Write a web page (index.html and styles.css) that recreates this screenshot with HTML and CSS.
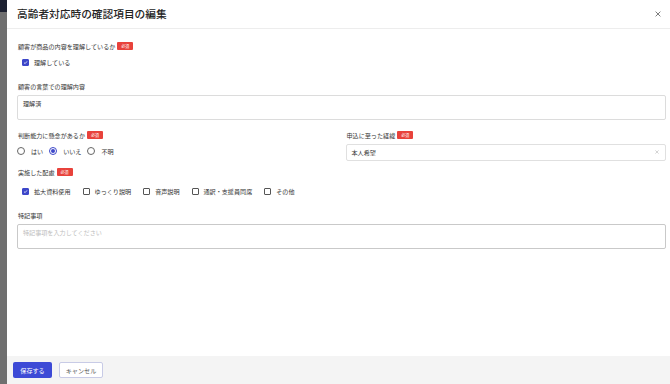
FILE: index.html
```html
<!DOCTYPE html>
<html lang="ja">
<head>
<meta charset="utf-8">
<link rel="stylesheet" href="styles.css">
</head>
<body>
<div class="page">
  <div class="strip"></div>
  <div class="modal">
    <div class="header">
      <h1 class="title">高齢者対応時の確認項目の編集</h1>
      <svg class="close" viewBox="0 0 10 10" width="6" height="6"><path d="M1 1L9 9M9 1L1 9" stroke="#777" stroke-width="1.6" fill="none"/></svg>
    </div>
    <div class="body">
      <div class="field f1">
        <div class="label">顧客が商品の内容を理解しているか<span class="badge">必須</span></div>
        <div class="options indent">
          <label class="opt"><span class="cb checked"><svg viewBox="0 0 10 10"><path d="M2 5.2L4.2 7.3L8 2.8" stroke="#fff" stroke-width="1.5" fill="none"/></svg></span>理解している</label>
        </div>
      </div>
      <div class="field f2">
        <div class="label">顧客の言葉での理解内容</div>
        <div class="textarea">理解済</div>
      </div>
      <div class="row f3">
        <div class="field">
          <div class="label">判断能力に懸念があるか<span class="badge">必須</span></div>
          <div class="options radios">
            <label class="opt"><span class="radio"></span>はい</label>
            <label class="opt"><span class="radio on"></span>いいえ</label>
            <label class="opt"><span class="radio"></span>不明</label>
          </div>
        </div>
        <div class="field">
          <div class="label">申込に至った経緯<span class="badge">必須</span></div>
          <div class="select"><span>本人希望</span><svg class="clear" viewBox="0 0 10 10" width="4" height="4"><path d="M1 1L9 9M9 1L1 9" stroke="#bbb" stroke-width="1.6" fill="none"/></svg></div>
        </div>
      </div>
      <div class="field f4">
        <div class="label">実施した配慮<span class="badge">必須</span></div>
        <div class="options indent wide">
          <label class="opt"><span class="cb checked"><svg viewBox="0 0 10 10"><path d="M2 5.2L4.2 7.3L8 2.8" stroke="#fff" stroke-width="1.5" fill="none"/></svg></span>拡大資料使用</label>
          <label class="opt"><span class="cb"></span>ゆっくり説明</label>
          <label class="opt"><span class="cb"></span>音声説明</label>
          <label class="opt"><span class="cb"></span>通訳・支援員同席</label>
          <label class="opt"><span class="cb"></span>その他</label>
        </div>
      </div>
      <div class="field f5">
        <div class="label">特記事項</div>
        <div class="textarea placeholder">特記事項を入力してください</div>
      </div>
    </div>
    <div class="footer">
      <button class="btn primary">保存する</button>
      <button class="btn secondary">キャンセル</button>
    </div>
  </div>
</div>
</body>
</html>
```
FILE: styles.css
```css
html, body {
  margin: 0;
  padding: 0;
  background: #fff;
  font-family: "Noto Sans CJK JP", "Noto Sans", sans-serif;
  color: #333;
}
.page {
  display: flex;
  width: 670px;
  height: 384px;
  overflow: hidden;
}
.strip {
  width: 7px;
  flex: none;
  background: linear-gradient(#1d2131 0, #1d2131 12px, #6f6f6f 12px, #6f6f6f 100%);
}
.modal {
  flex: 1;
  display: flex;
  flex-direction: column;
  background: #fff;
}
.header {
  height: 28px;
  flex: none;
  display: flex;
  align-items: center;
  justify-content: space-between;
  padding: 0 9px 0 10px;
  border-bottom: 1px solid #ededed;
}
.title {
  margin: 0;
  font-size: 10.7px;
  font-weight: 500;
  color: #222;
  line-height: 14px;
}
.close { display: block; }
.body {
  flex: 1;
  padding: 12.5px 4px 0 10px;
  display: flex;
  flex-direction: column;
}
.label {
  font-size: 6.1px;
  line-height: 9px;
  height: 9px;
  padding-left: 1px;
  margin-bottom: 4px;
  color: #333;
  display: flex;
  align-items: center;
}
.badge {
  display: inline-block;
  background: #e8423b;
  color: #fff;
  font-size: 4px;
  line-height: 8px;
  height: 8px;
  padding: 0 4px;
  margin-left: 2px;
  border-radius: 1px;
}
.options {
  display: flex;
  align-items: center;
  height: 9px;
  padding-top: 3px;
  font-size: 6.1px;
  color: #333;
}
.indent { padding-left: 5px; gap: 12px; }
.wide { padding-top: 6px; }
.radios { gap: 6px; }
.opt {
  display: flex;
  align-items: center;
  gap: 5px;
  line-height: 9px;
}
.radios .opt { gap: 6px; }
.cb {
  width: 7px;
  height: 7px;
  box-sizing: border-box;
  border: 1px solid #555;
  border-radius: 1px;
  display: inline-flex;
}
.cb.checked {
  background: #3d47c9;
  border-color: #3d47c9;
}
.cb svg { width: 100%; height: 100%; }
.radio {
  width: 8px;
  height: 8px;
  box-sizing: border-box;
  border: 1px solid #666;
  border-radius: 50%;
  display: inline-flex;
  align-items: center;
  justify-content: center;
}
.radio.on { border-color: #3d47c9; }
.radio.on::after {
  content: "";
  width: 4px;
  height: 4px;
  border-radius: 50%;
  background: #3d47c9;
}
.textarea {
  height: 25px;
  box-sizing: border-box;
  border: 1px solid #dcdcdc;
  border-radius: 2px;
  padding: 4px 5px;
  font-size: 6.1px;
  line-height: 8px;
  color: #333;
}
.textarea.placeholder { color: #bdbdbd; border-color: #c9c9c9; }
.select {
  height: 17px;
  box-sizing: border-box;
  border: 1px solid #e0e0e0;
  border-radius: 2px;
  display: flex;
  align-items: center;
  justify-content: space-between;
  padding: 0 6px 0 5px;
  font-size: 6.1px;
  color: #333;
}
.clear { display: block; }
.row {
  display: grid;
  grid-template-columns: 1fr 1fr;
  gap: 8px;
}
.f1 { margin-bottom: 15px; }
.f2 { margin-bottom: 11px; }
.f3 { margin-bottom: 7px; }
.f4 { margin-bottom: 15px; }
.footer {
  height: 28px;
  flex: none;
  background: #f4f4f4;
  display: flex;
  align-items: center;
  gap: 7px;
  padding: 0 6px;
}
.btn {
  height: 16px;
  border-radius: 2px;
  font-family: inherit;
  font-size: 6.1px;
  padding: 0;
  cursor: pointer;
}
.primary {
  width: 39px;
  background: #3d4ad6;
  color: #fff;
  border: none;
}
.secondary {
  width: 44px;
  background: #fff;
  color: #555;
  border: 1px solid #c8cbe6;
}
```
